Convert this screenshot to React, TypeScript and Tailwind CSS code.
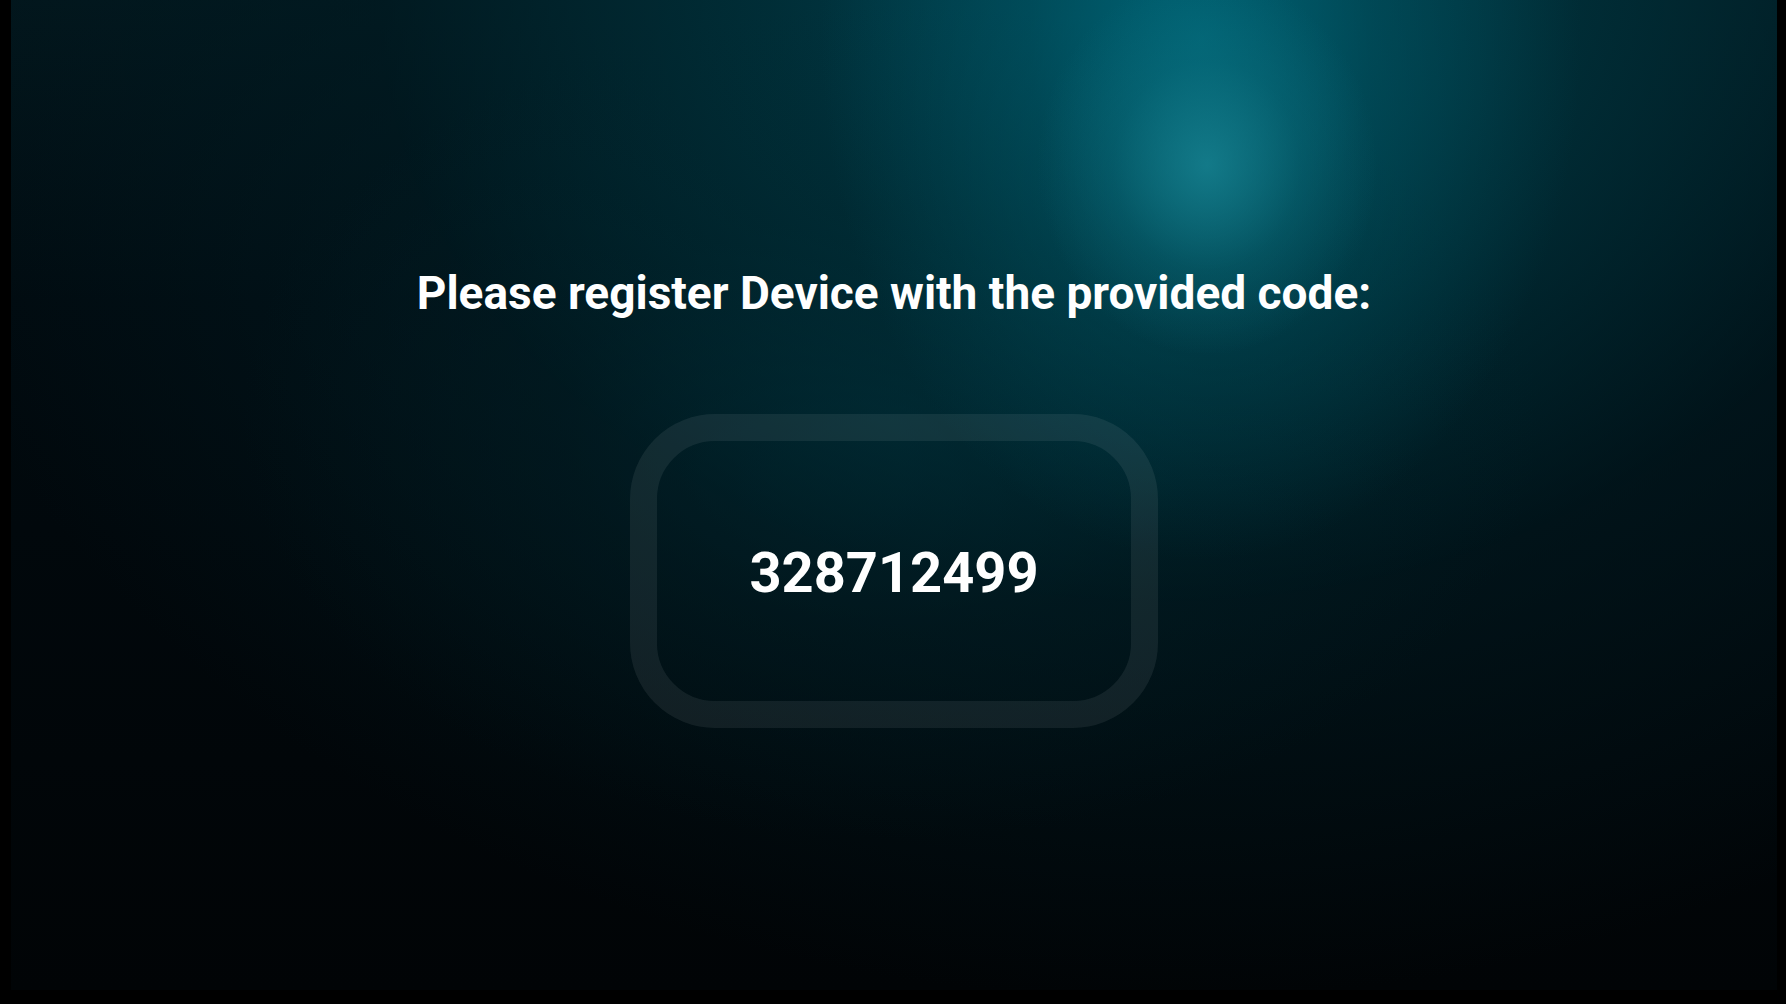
export default function App() {
  const code = '328712499';

  return (
    <div className="h-screen w-full bg-black pl-[11px] pr-[9px] pb-[14px] flex">
      {/* Screen area with teal light glow */}
      <main
        className="flex-1 flex flex-col items-center bg-[image:radial-gradient(ellipse_170px_190px_at_1196px_165px,rgba(25,135,150,0.75),rgba(15,120,135,0.3)_55%,transparent_100%),radial-gradient(ellipse_380px_520px_at_1190px_40px,rgba(0,105,122,0.8)_0%,rgba(0,90,105,0.45)_45%,transparent_100%),radial-gradient(ellipse_650px_420px_at_880px_420px,rgba(0,48,58,0.55)_0%,rgba(0,40,48,0.25)_50%,transparent_100%),radial-gradient(ellipse_1300px_1000px_at_1150px_0px,rgba(0,72,88,1)_0%,rgba(0,50,60,0.85)_30%,rgba(0,30,38,0.5)_60%,transparent_100%),linear-gradient(180deg,#02151b_0%,#010a0f_300px,#010406_100%)]"
        style={{ fontFamily: 'Roboto, "Liberation Sans", sans-serif' }}
      >
        <h1 className="pt-[270px] text-[46px] leading-none font-bold text-white">
          Please register Device with the provided code:
        </h1>

        <div className="mt-[98px] w-[528px] h-[314px] rounded-[85px] border-[27px] border-[rgba(255,255,255,0.07)] flex items-center justify-center">
          <span className="pt-1 text-[56px] font-bold text-white">{code}</span>
        </div>
      </main>
    </div>
  );
}
